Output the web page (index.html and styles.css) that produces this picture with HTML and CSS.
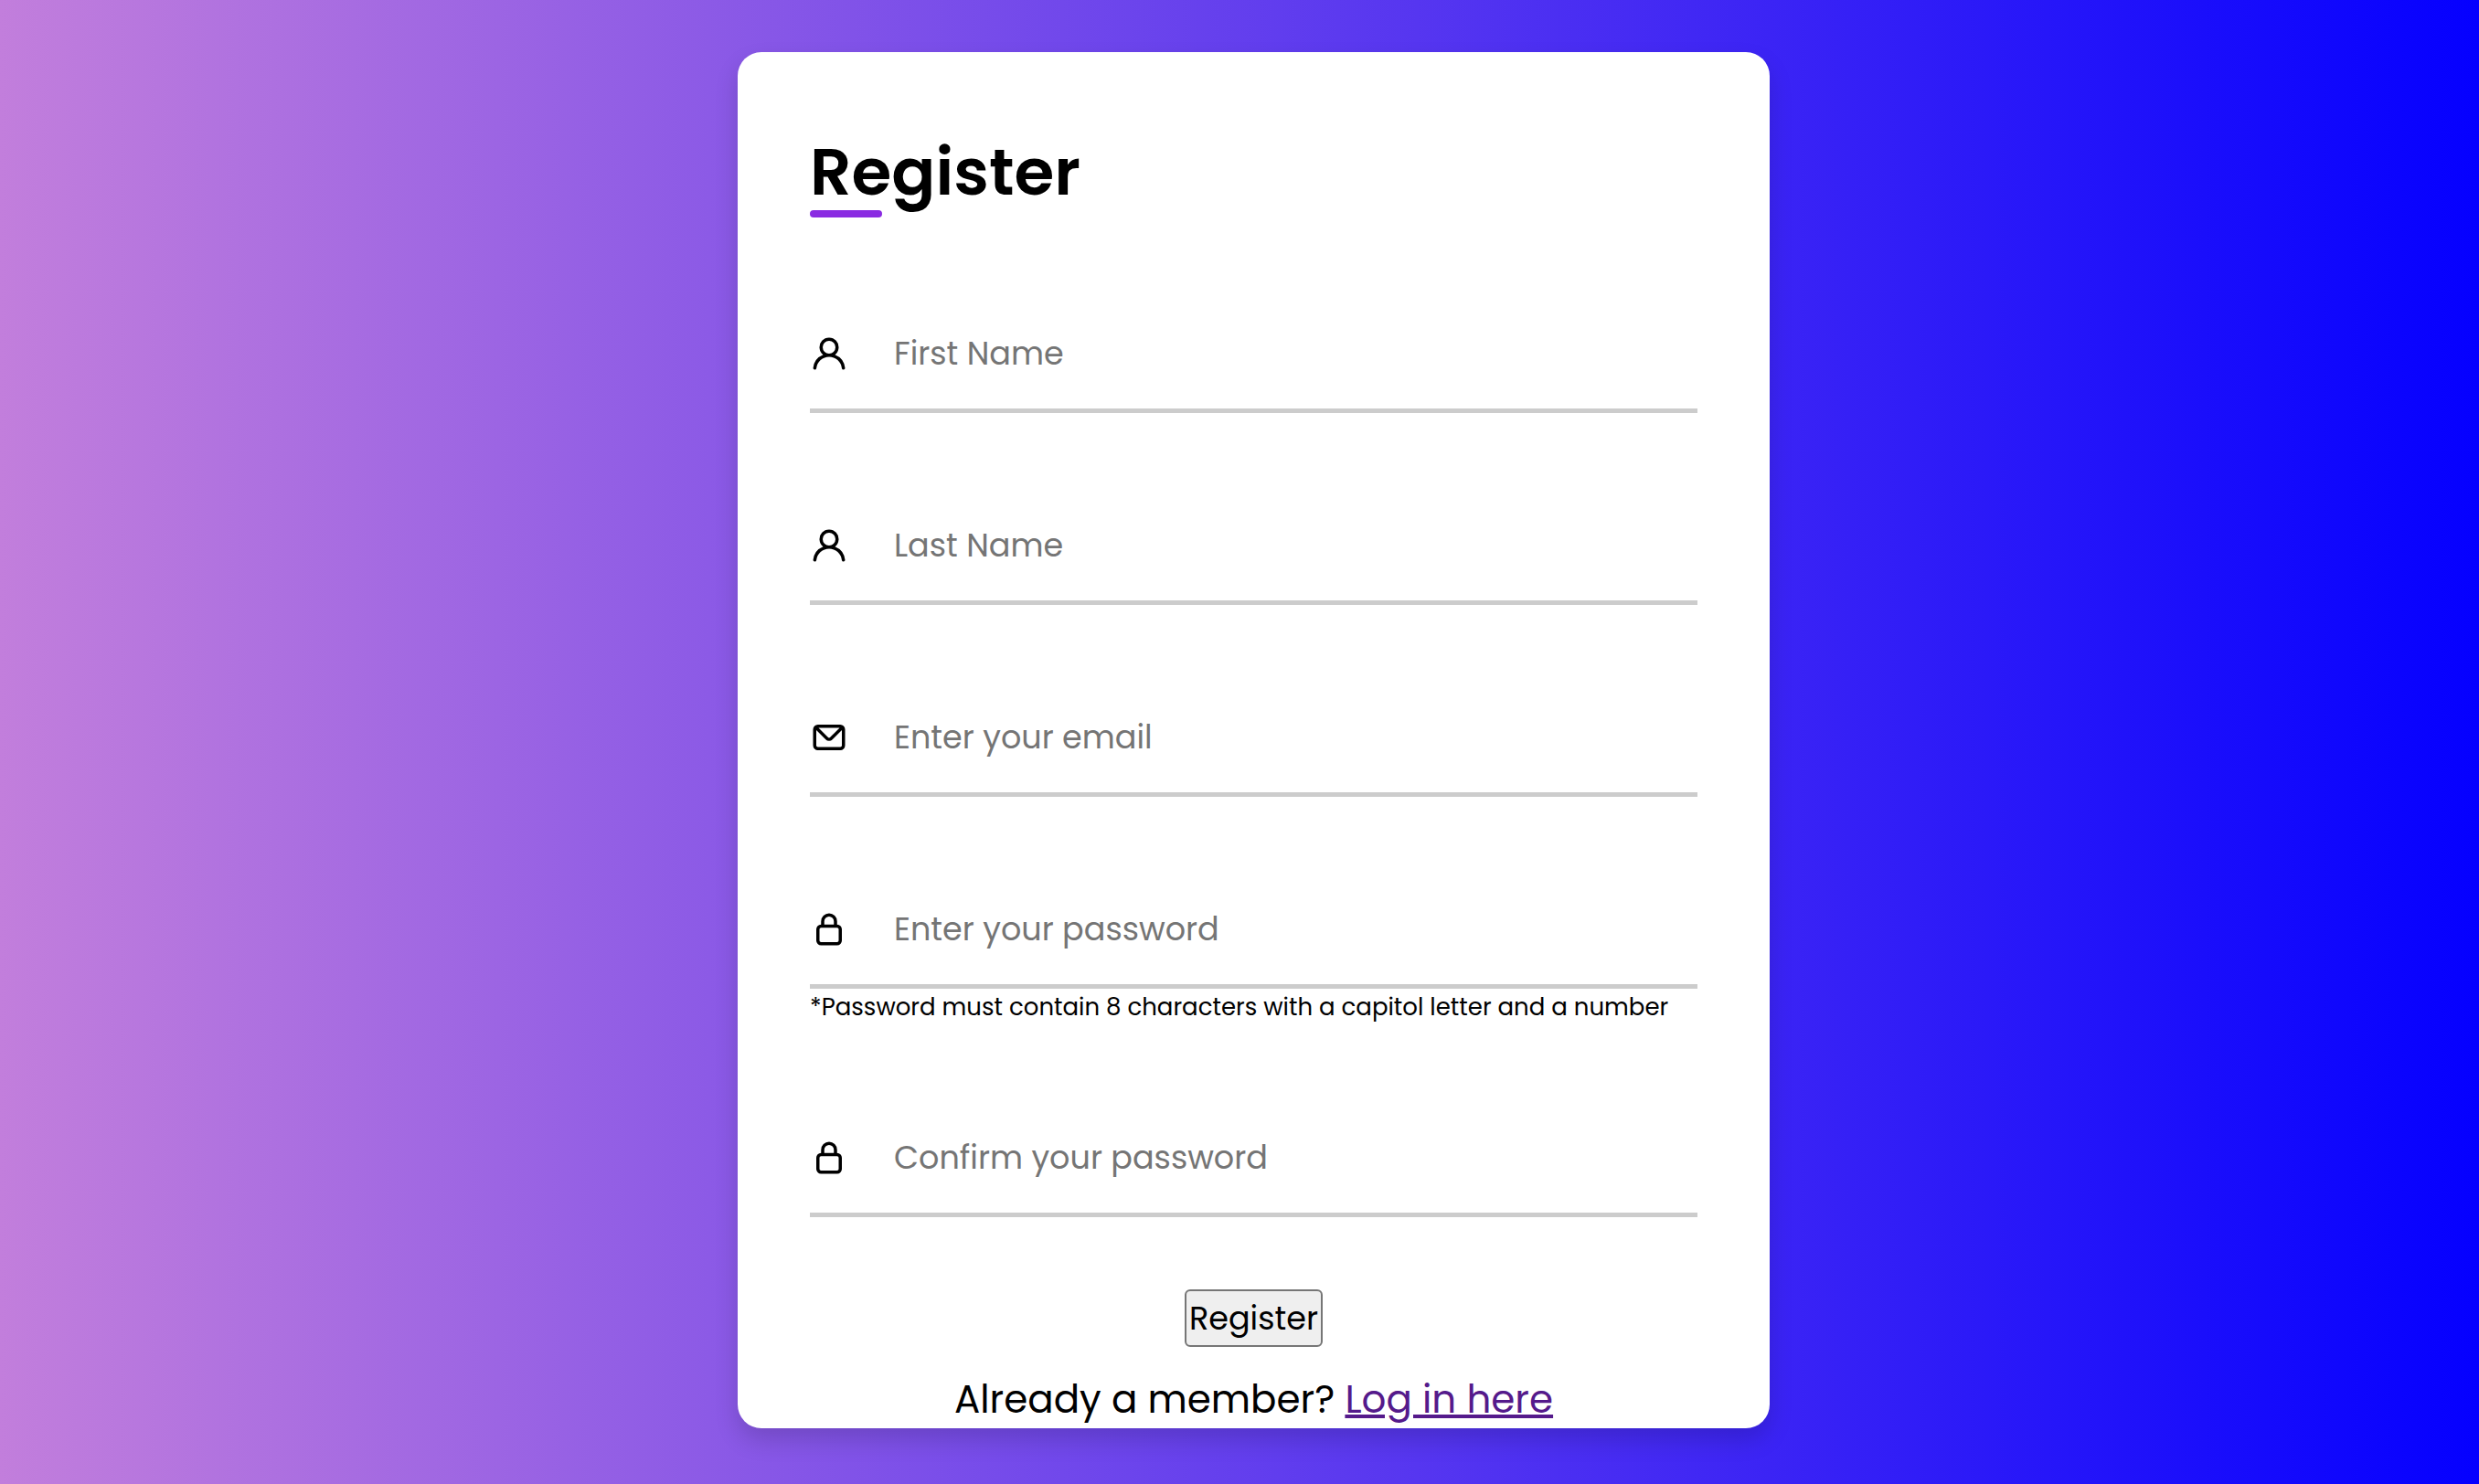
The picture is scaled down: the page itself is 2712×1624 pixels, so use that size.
FILE: index.html
```html
<!DOCTYPE html>
<html lang="en">
<head>
<meta charset="utf-8">
<meta name="viewport" content="width=device-width, initial-scale=1">
<title>Register</title>
<link rel="stylesheet" href="styles.css">
</head>
<body>
<svg class="sprite" aria-hidden="true">
  <symbol id="user" viewBox="0 0 24 24"><path d="M15.71,12.71a6,6,0,1,0-7.42,0,10,10,0,0,0-6.22,8.18,1,1,0,0,0,2,.22,8,8,0,0,1,15.9,0,1,1,0,0,0,1,.89h.11a1,1,0,0,0,.88-1.1A10,10,0,0,0,15.71,12.71ZM12,12a4,4,0,1,1,4-4A4,4,0,0,1,12,12Z"/></symbol>
  <symbol id="envelope" viewBox="0 0 24 24"><path d="M19,4H5A3,3,0,0,0,2,7V17a3,3,0,0,0,3,3H19a3,3,0,0,0,3-3V7A3,3,0,0,0,19,4Zm-.41,2-5.88,5.88a1,1,0,0,1-1.42,0L5.41,6ZM20,17a1,1,0,0,1-1,1H5a1,1,0,0,1-1-1V7.41l5.88,5.88a3,3,0,0,0,4.24,0L20,7.41Z"/></symbol>
  <symbol id="lock" viewBox="0 0 24 24"><path d="M17,9V7A5,5,0,0,0,7,7V9a3,3,0,0,0-3,3v7a3,3,0,0,0,3,3H17a3,3,0,0,0,3-3V12A3,3,0,0,0,17,9ZM9,7a3,3,0,0,1,6,0V9H9Zm9,12a1,1,0,0,1-1,1H7a1,1,0,0,1-1-1V12a1,1,0,0,1,1-1H17a1,1,0,0,1,1,1Z"/></symbol>
</svg>
<main class="card">
  <h1 class="title">Register</h1>
  <form class="form">
    <label class="field">
      <svg class="icon" aria-hidden="true"><use href="#user"/></svg>
      <input class="input" type="text" placeholder="First Name" aria-label="First Name">
    </label>
    <label class="field">
      <svg class="icon" aria-hidden="true"><use href="#user"/></svg>
      <input class="input" type="text" placeholder="Last Name" aria-label="Last Name">
    </label>
    <label class="field">
      <svg class="icon" aria-hidden="true"><use href="#envelope"/></svg>
      <input class="input" type="email" placeholder="Enter your email" aria-label="Email">
    </label>
    <div class="group">
      <label class="field">
        <svg class="icon" aria-hidden="true"><use href="#lock"/></svg>
        <input class="input" type="password" placeholder="Enter your password" aria-label="Password" aria-describedby="hint">
      </label>
      <p class="hint" id="hint">*Password must contain 8 characters with a capitol letter and a number</p>
    </div>
    <label class="field">
      <svg class="icon" aria-hidden="true"><use href="#lock"/></svg>
      <input class="input" type="password" placeholder="Confirm your password" aria-label="Confirm password">
    </label>
    <button class="submit" type="submit">Register</button>
  </form>
  <p class="login">Already a member? <a class="link" href="#login">Log in here</a></p>
</main>
</body>
</html>
```

FILE: styles.css
```css
* {
  box-sizing: border-box;
  margin: 0;
  padding: 0;
}

body {
  display: flex;
  justify-content: center;
  align-items: flex-start;
  min-height: 100vh;
  padding: 57px 0 61px 31px;
  background: linear-gradient(to right, #c27edc, #0500ff);
  font-family: "Poppins", "Open Sans", sans-serif;
  color: #000;
}

.sprite {
  display: none;
}

.card {
  width: 100%;
  max-width: 1129px;
  padding: 79px 79px 0;
  border-radius: 26px;
  background: #fff;
  box-shadow: 0 13px 26px rgba(0, 0, 0, 0.15);
}

.title {
  position: relative;
  margin-bottom: 81px;
  font-size: 71px;
  font-weight: 600;
  line-height: 104px;
}

.title::after {
  content: "";
  position: absolute;
  left: 0;
  bottom: 2px;
  width: 79px;
  height: 8px;
  border-radius: 4px;
  background: #8a2be2;
}

.form {
  display: flex;
  flex-direction: column;
  gap: 79px;
}

.field {
  display: flex;
  align-items: center;
  gap: 50px;
  height: 131px;
  padding-top: 5px;
  border-bottom: 5px solid #ccc;
}

.icon {
  flex: none;
  width: 42px;
  height: 42px;
}

.input {
  flex: 1;
  min-width: 0;
  height: 100%;
  border: none;
  outline: none;
  background: none;
  font: inherit;
  font-size: 35px;
}

.input::placeholder {
  color: #757575;
}

.hint {
  font-size: 26px;
  line-height: 40px;
}

.submit {
  align-self: center;
  padding: 3px;
  border: 2px solid #767676;
  border-radius: 6px;
  background: #efefef;
  font: inherit;
  font-size: 35px;
  line-height: 53px;
  color: #000;
}

.login {
  margin-top: 26px;
  font-size: 42px;
  line-height: 63px;
  text-align: center;
}

.link {
  color: #551a8b;
  text-decoration-thickness: 4px;
}
```
